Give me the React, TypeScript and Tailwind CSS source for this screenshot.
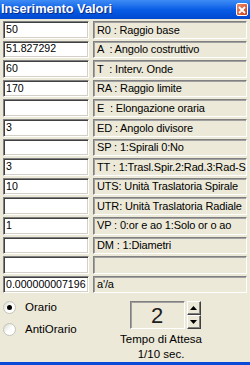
import React from "react";

const rows: { value: string; label: string }[] = [
  { value: "50", label: "R0 : Raggio base" },
  { value: "51.827292", label: "A  : Angolo costruttivo" },
  { value: "60", label: "T  : Interv. Onde" },
  { value: "170", label: "RA : Raggio limite" },
  { value: "", label: "E  : Elongazione oraria" },
  { value: "3", label: "ED : Angolo divisore" },
  { value: "", label: "SP : 1:Spirali 0:No" },
  { value: "3", label: "TT : 1:Trasl.Spir.2:Rad.3:Rad-S" },
  { value: "10", label: "UTS: Unità Traslatoria Spirale" },
  { value: "", label: "UTR: Unità Traslatoria Radiale" },
  { value: "1", label: "VP : 0:or e ao 1:Solo or o ao" },
  { value: "", label: "DM : 1:Diametri" },
  { value: "", label: "" },
  { value: "0.000000007196", label: "a'/a" },
];

function Radio({ checked, label }: { checked?: boolean; label: string }) {
  return (
    <div className="flex items-center gap-[9px] h-[21px]">
      <div className="w-[13px] h-[13px] rounded-full border border-[#c4c4bc] bg-gradient-to-br from-[#d6d6ce] via-white to-white flex items-center justify-center">
        {checked && <div className="w-[5px] h-[5px] rounded-full bg-black" />}
      </div>
      <span className="text-[11.5px] text-black">{label}</span>
    </div>
  );
}

function SpinButton({ up }: { up?: boolean }) {
  return (
    <div className="w-[14px] h-[14px] bg-[#ECE9D8] border border-t-white border-l-white border-b-[#404040] border-r-[#404040] shadow-[inset_-1px_-1px_0_#808080] flex items-center justify-center">
      <svg width="7" height="4" viewBox="0 0 7 4">
        {up ? <path d="M3.5 0 L7 4 L0 4 Z" fill="#000" /> : <path d="M0 0 L7 0 L3.5 4 Z" fill="#000" />}
      </svg>
    </div>
  );
}

export default function App() {
  return (
    <div className="w-[250px] h-[365px] bg-[#ECE9D8] flex flex-col overflow-hidden font-['Liberation_Sans',Arial,sans-serif]">
      {/* Title bar */}
      <div className="h-[19px] shrink-0 flex items-center justify-between bg-gradient-to-b from-[#3d8cf5] via-[#0a5de6] to-[#0048d0] pl-[1px] pr-[2px]">
        <span className="text-white font-bold text-[12.8px] leading-none [text-shadow:1px_1px_0_#0a2a8a]">Inserimento Valori</span>
        <div className="w-[12px] h-[13px] rounded-[2px] border border-white bg-gradient-to-br from-[#f08a6a] to-[#c83a10] flex items-center justify-center">
          <svg width="8" height="8" viewBox="0 0 8 8">
            <path d="M1 1 L7 7 M7 1 L1 7" stroke="#fff" strokeWidth="1.8" />
          </svg>
        </div>
      </div>

      {/* Rows */}
      <div className="flex flex-col gap-[2px] pt-[2px] pl-[3px] pr-[3px]">
        {rows.map((r, i) => (
          <div key={i} className="flex gap-[4px] h-[17.6px]">
            <div className="w-[86px] shrink-0 bg-white border border-t-[#808080] border-l-[#808080] border-b-white border-r-white shadow-[inset_1px_1px_0_#404040,inset_-1px_-1px_0_#d4d0c8] flex items-center px-[2px] text-[10.6px] text-black whitespace-nowrap overflow-hidden">
              {r.value}
            </div>
            <div className="flex-1 min-w-0 border border-t-[#808080] border-l-[#808080] border-b-white border-r-white shadow-[inset_1px_1px_0_#a0a0a0] flex items-center pl-[3px] pr-[1px] text-[11px] tracking-[-0.15px] text-black whitespace-pre overflow-hidden">
              {r.label}
            </div>
          </div>
        ))}
      </div>

      {/* Bottom */}
      <div className="flex flex-1 pt-[4px]">
        <div className="w-[129px] shrink-0 flex flex-col pl-[3px] gap-[1px]">
          <Radio checked label="Orario" />
          <Radio label="AntiOrario" />
        </div>
        <div className="w-[72px] flex flex-col items-center pt-[4px]">
          <div className="flex gap-[2px]">
            <div className="w-[55px] h-[28px] border border-t-[#808080] border-l-[#808080] border-b-white border-r-white shadow-[inset_1px_1px_0_#a0a0a0] flex items-center justify-center text-[22px] font-light text-[#202020]">
              2
            </div>
            <div className="flex flex-col">
              <SpinButton up />
              <SpinButton />
            </div>
          </div>
          <span className="text-[11.5px] text-black mt-[3px] leading-[15px] -ml-[8px] whitespace-nowrap">Tempo di Attesa</span>
          <span className="text-[11.5px] text-black leading-[14px] -ml-[8px] whitespace-nowrap">1/10 sec.</span>
        </div>
      </div>
      <div className="h-[3px] shrink-0 bg-[#0a4ad8]" />
    </div>
  );
}
